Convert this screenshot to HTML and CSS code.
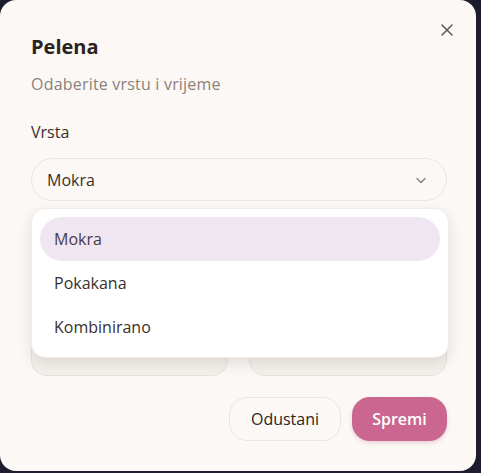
FILE: index.html
```html
<!DOCTYPE html>
<html lang="hr">
<head>
<meta charset="utf-8">
<title>Pelena</title>
<link rel="stylesheet" href="styles.css">
</head>
<body>
<div class="dialog">
  <button class="close" aria-label="Zatvori">
    <svg width="12" height="12" viewBox="0 0 12 12"><path d="M1 1L11 11M11 1L1 11" stroke="#5f5753" stroke-width="1.5" stroke-linecap="round" fill="none"/></svg>
  </button>
  <h2 class="title">Pelena</h2>
  <p class="subtitle">Odaberite vrstu i vrijeme</p>
  <label class="label">Vrsta</label>
  <div class="select">
    <span>Mokra</span>
    <svg width="14" height="14" viewBox="0 0 14 14"><path d="M3 5.5L7 9.5L11 5.5" stroke="#8d847e" stroke-width="1.4" stroke-linecap="round" stroke-linejoin="round" fill="none"/></svg>
  </div>
  <div class="row">
    <div class="input"></div>
    <div class="input"></div>
  </div>
  <div class="actions">
    <button class="btn btn-ghost">Odustani</button>
    <button class="btn btn-primary">Spremi</button>
  </div>
  <ul class="menu">
    <li class="item active">Mokra</li>
    <li class="item">Pokakana</li>
    <li class="item">Kombinirano</li>
  </ul>
</div>
</body>
</html>
```
FILE: styles.css
```css
* { box-sizing: border-box; }
html, body { margin: 0; padding: 0; }
body {
  background: #1d1c2c;
  font-family: "Open Sans", "Noto Sans", sans-serif;
  width: 481px;
  height: 473px;
  overflow: hidden;
}
.dialog {
  position: relative;
  width: 476px;
  height: 471px;
  background: #fbf8f5;
  border-radius: 16px;
  padding: 33px 29px 0 31px;
  display: flex;
  flex-direction: column;
}
.close {
  position: absolute;
  top: 23px;
  right: 22px;
  width: 14px;
  height: 14px;
  padding: 0;
  border: 0;
  background: none;
  display: flex;
  align-items: center;
  justify-content: center;
}
.title {
  margin: 0;
  font-size: 20px;
  line-height: 28px;
  font-weight: 700;
  color: #2b221e;
}
.subtitle {
  margin: 12px 0 0;
  font-size: 16px;
  line-height: 22px;
  letter-spacing: 0.2px;
  color: #8b817a;
}
.label {
  margin-top: 26px;
  font-size: 16px;
  line-height: 22px;
  color: #3a302b;
}
.select {
  margin-top: 15px;
  height: 43px;
  border: 1px solid #ebe5df;
  border-radius: 22px;
  background: #fbf8f5;
  display: flex;
  align-items: center;
  justify-content: space-between;
  padding: 0 18px 0 15px;
  font-size: 16px;
  color: #3a302b;
}
.row {
  margin-top: 132px;
  display: grid;
  grid-template-columns: 197px 198px;
  column-gap: 21px;
}
.input {
  height: 43px;
  border: 1px solid #e8e2dc;
  border-radius: 16px;
  background: #f4f1ed;
}
.actions {
  margin-top: 21px;
  display: flex;
  justify-content: flex-end;
  gap: 11px;
}
.btn {
  height: 44px;
  border-radius: 18px;
  font-family: "Open Sans", "Noto Sans", sans-serif;
  font-size: 16px;
  padding: 0;
}
.btn-ghost {
  width: 112px;
  background: #fbf8f5;
  border: 1px solid #ece6e0;
  color: #2d2420;
}
.btn-primary {
  width: 95px;
  background: #cb6690;
  border: 0;
  color: #fff;
  font-weight: 600;
  box-shadow: 0 2px 4px rgba(160, 60, 100, 0.2);
}
.menu {
  position: absolute;
  top: 208px;
  left: 31px;
  width: 418px;
  margin: 0;
  padding: 8px;
  list-style: none;
  background: #fff;
  border-radius: 14px;
  border: 1px solid #f0ebe6;
  box-shadow: 0 6px 14px rgba(60, 40, 30, 0.12);
}
.item {
  height: 44px;
  border-radius: 22px;
  padding: 0 14px;
  display: flex;
  align-items: center;
  font-size: 16px;
  color: #3a302b;
}
.item.active {
  background: #efe6f2;
  color: #4a3b4a;
}
```
